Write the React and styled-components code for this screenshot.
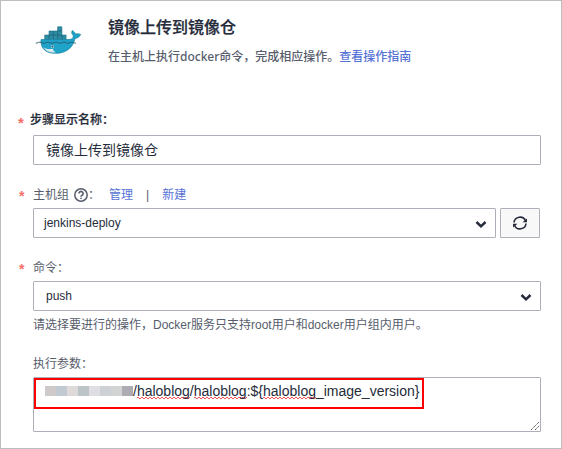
import React from "react";
import styled, { createGlobalStyle } from "styled-components";

const GlobalStyle = createGlobalStyle`
  * { box-sizing: border-box; }
  body { margin: 0; background: #fff; }
`;

const Panel = styled.main`
  width: 562px;
  height: 449px;
  padding: 16px 20px 0 17px;
  border: 1px solid #bdbdbd;
  background: #fff;
  color: #575d6c;
  font: 12px/18px "Liberation Sans", "Noto Sans CJK SC", sans-serif;
  overflow: hidden;
`;

const Header = styled.header`
  display: flex;
  height: 94px;
`;

const Logo = styled.svg`
  flex: none;
  width: 46px;
  height: 29px;
  margin: 8px 27px 0 17px;
`;

const Title = styled.h1`
  margin: 0;
  color: #252b3a;
  font-size: 16px;
  font-weight: 500;
  line-height: 22px;
  -webkit-text-stroke: 0.25px currentColor;
`;

const Description = styled.p`
  margin: 9px 0 0;
  font-family: "Noto Sans", "Noto Sans CJK SC", sans-serif;
  font-weight: 500;
  white-space: nowrap;
`;

const Link = styled.a`
  color: #5672d6;
`;

const Field = styled.section`
  height: ${(p) => p.$height}px;
`;

const Label = styled.div`
  display: flex;
  align-items: center;
  height: 18px;
  color: ${(p) => (p.$strong ? "#252b3a" : "#575d6c")};
  font-weight: ${(p) => (p.$strong ? 500 : 400)};
  -webkit-text-stroke: ${(p) => (p.$strong ? "0.2px currentColor" : "0")};
  white-space: pre;
`;

const Mark = styled.span`
  flex: none;
  width: ${(p) => (p.$strong ? 12 : 15)}px;
  height: ${(p) => (p.$strong ? 15 : 18)}px;
  padding-left: ${(p) => (p.$strong ? 0 : 1)}px;
  color: #f66f6a;
  font-size: ${(p) => (p.$strong ? 15 : 14)}px;
  font-weight: 700;
  line-height: 20px;
  -webkit-text-stroke: 0;
`;

const HelpIcon = styled.svg`
  width: 14px;
  height: 14px;
  margin: 0 0 0 5px;
`;

const Actions = styled.span`
  display: flex;
  gap: 13px;
  margin-left: 9px;
`;

const Controls = styled.div`
  display: flex;
  gap: 4px;
  margin: ${(p) => p.$top}px 0 0 15px;
`;

const Box = styled.div`
  display: flex;
  align-items: center;
  justify-content: space-between;
  width: ${(p) => p.$width || 508}px;
  height: 30px;
  padding: 0 8px 0 ${(p) => p.$pad || 12}px;
  border: 1px solid #adb0b8;
  border-radius: 1px;
  color: #252b3a;
  font-size: ${(p) => p.$size || 12}px;
`;

const Chevron = styled.svg`
  width: 12px;
  height: 9px;
  margin-top: 2px;
`;

const RefreshButton = styled.button`
  display: flex;
  align-items: center;
  justify-content: center;
  width: 40px;
  height: 30px;
  padding: 0;
  border: 1px solid #adb0b8;
  border-radius: 1px;
  background: #f8f8f8;
`;

const Hint = styled.p`
  margin: 5px 0 0 15px;
  white-space: nowrap;
`;

const TextArea = styled.div`
  position: relative;
  width: 508px;
  height: 55px;
  margin: 4px 0 0 15px;
  border: 1px solid #adb0b8;
  border-radius: 1px;
`;

const Highlight = styled.div`
  display: flex;
  width: 390px;
  height: 31px;
  padding: 2px 0 0 9px;
  border: 2px solid #f00;
  color: #252b3a;
  font-size: 14px;
  line-height: 18px;
  white-space: nowrap;
`;

const Mosaic = styled.span`
  display: flex;
  height: 10px;
  margin-top: 4px;
`;

const Tile = styled.i`
  width: 11px;
  background: ${(p) => p.$color};
`;

const Misspelled = styled.span`
  background-image:
    linear-gradient(90deg, #f0575a 50%, transparent 50%),
    linear-gradient(90deg, transparent 50%, #f0575a 50%);
  background-size: 4px 1px;
  background-position: 0 calc(100% - 1px), 0 100%;
  background-repeat: repeat-x;
`;

const Grip = styled.svg`
  position: absolute;
  right: 1px;
  bottom: 1px;
  width: 8px;
  height: 8px;
`;

const tiles = ["#cecaca", "#c1c9d1", "#dedada", "#bdc4c8", "#dedee3", "#cdd1d6", "#d1d4d3", "#adacb2"];

const DownArrow = () => (
  <Chevron viewBox="0 0 12 9">
    <path d="M1.500 2 6 6.300 10.500 2" fill="none" stroke="#252b3a" strokeWidth="2.500" />
  </Chevron>
);

const DockerLogo = () => (
  <Logo viewBox="0 0 46 29">
    <g fill="#2f8ba2" stroke="#1f7087" strokeWidth=".6">
      <path d="M9.700 10h4.300v5H9.700zM14 10h4.300v5H14zM18.300 10h4.300v5h-4.300zM22.600 10h4.300v5h-4.300zM26.900 10h4.200v5h-4.200zM14 6h4.300v4H14zM18.300 6h4.300v4h-4.300zM22.600 6h4.300v4h-4.300zM22.600 1.800h4.300V6h-4.300z" />
    </g>
    <path d="M6 14.600H34c3 0 4.500-1.600 4.300-4-1.600-1.600-2-3.400-1-5 2 1.100 2.700 2.200 2.900 3.600 1.700-.6 3.900-.4 5.400.2-1.100 2.500-2.900 3.700-5.600 4C38 22.500 31.500 28.300 20.500 28.300 10.500 28.300 5.500 23.500 6 14.600Z" fill="#1fa3c9" stroke="#1d86a5" strokeWidth=".8" />
    <path d="M8.500 22.500c3 1.800 6.500 1.700 9.500 1.200.2 1.700 1.300 3 3 3.800C15 28 10.500 26 8.500 22.500Z" fill="#dce9eb" />
    <path d="M.8 18.200c2 0 2-1 4-1s2 1 4 1 2-1 4-1 2 1 4 1 2-1 4-1 2 1 4 1 2-1 4-1 2 1 4 1 2-1 4-1 2 1 4 1" fill="none" stroke="#245568" strokeWidth=".9" />
    <circle cx="17.500" cy="21.500" r="1.500" fill="#c7e6ee" />
    <circle cx="17.500" cy="21.500" r=".9" fill="#17485b" />
  </Logo>
);

export default function App() {
  return (
    <>
      <GlobalStyle />
      <Panel>
        <Header>
          <DockerLogo />
          <div>
            <Title>镜像上传到镜像仓</Title>
            <Description>
              在主机上执行docker命令，完成相应操作。<Link>查看操作指南</Link>
            </Description>
          </div>
        </Header>
        <Field $height={75}>
          <Label $strong>
            <Mark $strong>*</Mark>步骤显示名称：
          </Label>
          <Controls $top={6}>
            <Box $size={14}>镜像上传到镜像仓</Box>
          </Controls>
        </Field>
        <Field $height={73}>
          <Label>
            <Mark>*</Mark>主机组
            <HelpIcon viewBox="0 0 14 14" fill="none" stroke="#575d6c">
              <circle cx="7" cy="7" r="6.200" strokeWidth="1.500" />
              <path d="M4.900 5.500a2.100 2.100 0 1 1 3.200 1.800C7.300 7.700 7 8 7 8.800M7 9.800v1.300" strokeWidth="1.600" />
            </HelpIcon>
            ：
            <Actions>
              <Link>管理</Link>
              <span>|</span>
              <Link>新建</Link>
            </Actions>
          </Label>
          <Controls $top={4}>
            <Box $width={463} $pad={10}>
              jenkins-deploy
              <DownArrow />
            </Box>
            <RefreshButton aria-label="refresh">
              <svg width="16" height="16" viewBox="0 0 16 16">
                <path d="M2 7.500A6 6 0 0 1 13.500 5.800M14 8.500A6 6 0 0 1 2.500 10.200" fill="none" stroke="#252b3a" strokeWidth="1.600" />
                <path d="M10.500 7.200H15V3.600zM5.500 8.800H1v3.600z" fill="#252b3a" />
              </svg>
            </RefreshButton>
          </Controls>
        </Field>
        <Field $height={96}>
          <Label>
            <Mark>*</Mark>命令：
          </Label>
          <Controls $top={4}>
            <Box>
              push
              <DownArrow />
            </Box>
          </Controls>
          <Hint>请选择要进行的操作，Docker服务只支持root用户和docker用户组内用户。</Hint>
        </Field>
        <Field $height={80}>
          <Label>
            <Mark />
            执行参数：
          </Label>
          <TextArea>
            <Highlight>
              <Mosaic>
                {tiles.map((color) => (
                  <Tile key={color} $color={color} />
                ))}
              </Mosaic>
              <span>
                /<Misspelled>haloblog</Misspelled>/<Misspelled>haloblog</Misspelled>:$&#123;
                <Misspelled>haloblog</Misspelled>_image_version&#125;
              </span>
            </Highlight>
            <Grip viewBox="0 0 8 8">
              <path d="M0 8 8 0M4 8l4-4" stroke="#555" strokeWidth="1" strokeDasharray="1.414 .6" />
            </Grip>
          </TextArea>
        </Field>
      </Panel>
    </>
  );
}
